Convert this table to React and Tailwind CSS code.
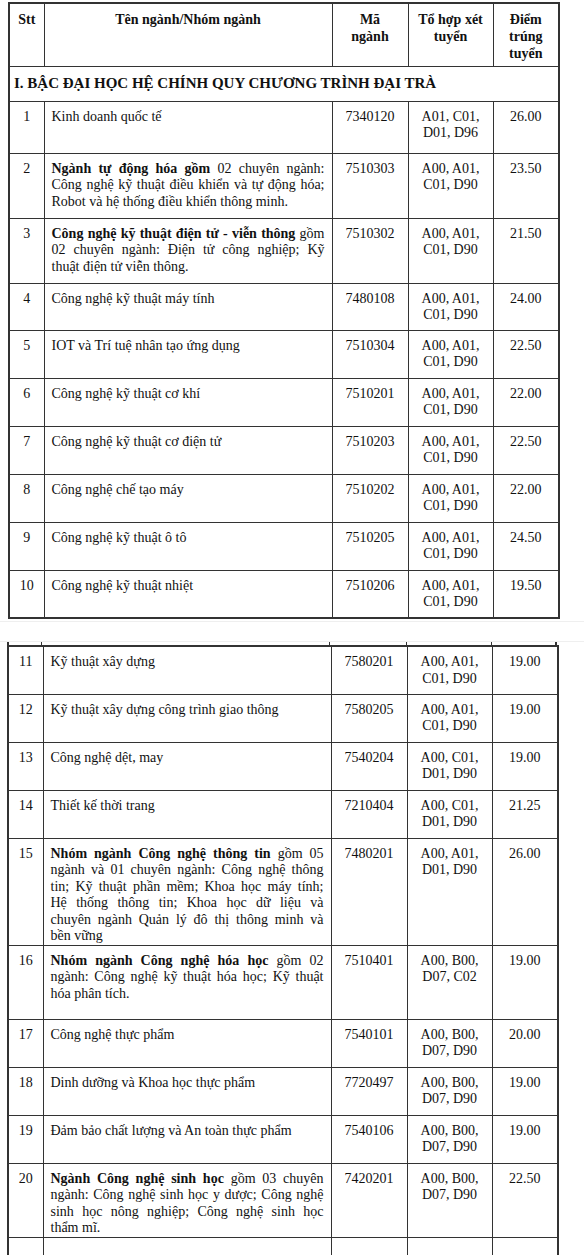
const B = ({ children }) => <span className="font-bold">{children}</span>;

const table1 = [
  { stt: '1', h: 'h-[52px]', name: ['Kinh doanh quốc tế'], ma: '7340120', to: ['A01, C01,', 'D01, D96'], diem: '26.00' },
  {
    stt: '2',
    h: 'h-[65px]',
    name: [
      <><B>Ngành tự động hóa gồm</B> 02 chuyên ngành:</>,
      'Công nghệ kỹ thuật điều khiển và tự động hóa;',
      'Robot và hệ thống điều khiển thông minh.',
    ],
    ma: '7510303',
    to: ['A00, A01,', 'C01, D90'],
    diem: '23.50',
  },
  {
    stt: '3',
    h: 'h-[65px]',
    name: [
      <><B>Công nghệ kỹ thuật điện tử - viễn thông</B> gồm</>,
      '02 chuyên ngành: Điện tử công nghiệp; Kỹ',
      'thuật điện tử viễn thông.',
    ],
    ma: '7510302',
    to: ['A00, A01,', 'C01, D90'],
    diem: '21.50',
  },
  { stt: '4', h: 'h-[47px]', name: ['Công nghệ kỹ thuật máy tính'], ma: '7480108', to: ['A00, A01,', 'C01, D90'], diem: '24.00' },
  { stt: '5', h: 'h-[48px]', name: ['IOT và Trí tuệ nhân tạo ứng dụng'], ma: '7510304', to: ['A00, A01,', 'C01, D90'], diem: '22.50' },
  { stt: '6', h: 'h-[48px]', name: ['Công nghệ kỹ thuật cơ khí'], ma: '7510201', to: ['A00, A01,', 'C01, D90'], diem: '22.00' },
  { stt: '7', h: 'h-[48px]', name: ['Công nghệ kỹ thuật cơ điện tử'], ma: '7510203', to: ['A00, A01,', 'C01, D90'], diem: '22.50' },
  { stt: '8', h: 'h-[48px]', name: ['Công nghệ chế tạo máy'], ma: '7510202', to: ['A00, A01,', 'C01, D90'], diem: '22.00' },
  { stt: '9', h: 'h-[48px]', name: ['Công nghệ kỹ thuật ô tô'], ma: '7510205', to: ['A00, A01,', 'C01, D90'], diem: '24.50' },
  { stt: '10', h: 'h-[48px]', name: ['Công nghệ kỹ thuật nhiệt'], ma: '7510206', to: ['A00, A01,', 'C01, D90'], diem: '19.50' },
];

const table2 = [
  { stt: '11', h: 'h-[48px]', name: ['Kỹ thuật xây dựng'], ma: '7580201', to: ['A00, A01,', 'C01, D90'], diem: '19.00' },
  { stt: '12', h: 'h-[48px]', name: ['Kỹ thuật xây dựng công trình giao thông'], ma: '7580205', to: ['A00, A01,', 'C01, D90'], diem: '19.00' },
  { stt: '13', h: 'h-[48px]', name: ['Công nghệ dệt, may'], ma: '7540204', to: ['A00, C01,', 'D01, D90'], diem: '19.00' },
  { stt: '14', h: 'h-[48px]', name: ['Thiết kế thời trang'], ma: '7210404', to: ['A00, C01,', 'D01, D90'], diem: '21.25' },
  {
    stt: '15',
    h: 'h-[106px]',
    name: [
      <><B>Nhóm ngành Công nghệ thông tin</B> gồm 05</>,
      'ngành và 01 chuyên ngành: Công nghệ thông',
      'tin; Kỹ thuật phần mềm; Khoa học máy tính;',
      'Hệ thống thông tin; Khoa học dữ liệu và',
      'chuyên ngành Quản lý đô thị thông minh và',
      'bền vững',
    ],
    ma: '7480201',
    to: ['A00, A01,', 'D01, D90'],
    diem: '26.00',
  },
  {
    stt: '16',
    h: 'h-[74px]',
    name: [
      <><B>Nhóm ngành Công nghệ hóa học</B> gồm 02</>,
      'ngành: Công nghệ kỹ thuật hóa học; Kỹ thuật',
      'hóa phân tích.',
    ],
    ma: '7510401',
    to: ['A00, B00,', 'D07, C02'],
    diem: '19.00',
  },
  { stt: '17', h: 'h-[48px]', name: ['Công nghệ thực phẩm'], ma: '7540101', to: ['A00, B00,', 'D07, D90'], diem: '20.00' },
  { stt: '18', h: 'h-[48px]', name: ['Dinh dưỡng và Khoa học thực phẩm'], ma: '7720497', to: ['A00, B00,', 'D07, D90'], diem: '19.00' },
  { stt: '19', h: 'h-[48px]', name: ['Đảm bảo chất lượng và An toàn thực phẩm'], ma: '7540106', to: ['A00, B00,', 'D07, D90'], diem: '19.00' },
  {
    stt: '20',
    h: 'h-[73px]',
    name: [
      <><B>Ngành Công nghệ sinh học</B> gồm 03 chuyên</>,
      'ngành: Công nghệ sinh học y dược; Công nghệ',
      'sinh học nông nghiệp; Công nghệ sinh học',
      'thẩm mĩ.',
    ],
    ma: '7420201',
    to: ['A00, B00,', 'D07, D90'],
    diem: '22.50',
  },
];

const cell = 'border border-[#333] align-top pt-[7px] px-[7px]';

function Cols() {
  return (
    <colgroup>
      <col className="w-[35px]" />
      <col className="w-[288px]" />
      <col className="w-[76px]" />
      <col className="w-[85px]" />
      <col className="w-[66px]" />
    </colgroup>
  );
}

function Row({ r }) {
  return (
    <tr className={r.h}>
      <td className={`${cell} text-center`}>{r.stt}</td>
      <td className={cell}>
        {r.name.map((line, i) =>
          i < r.name.length - 1 ? (
            <div key={i} className="text-justify [text-align-last:justify]">{line}</div>
          ) : (
            <div key={i}>{line}</div>
          )
        )}
      </td>
      <td className={`${cell} text-center`}>{r.ma}</td>
      <td className={`${cell} text-center`}>
        {r.to.map((t) => (
          <div key={t}>{t}</div>
        ))}
      </td>
      <td className={`${cell} text-center`}>{r.diem}</td>
    </tr>
  );
}

export default function App() {
  return (
    <div className="bg-white min-h-[1255px] pt-[2px] font-['Liberation_Serif',serif] text-[14px] leading-[16.5px] text-[#111]">
      <table className="ml-[8px] w-[550px] table-fixed border-collapse border-2 border-[#333]">
        <Cols />
        <tbody>
          <tr className="h-[63px] font-bold leading-[17px]">
            <td className={`${cell} text-center`}>Stt</td>
            <td className={`${cell} text-center`}>Tên ngành/Nhóm ngành</td>
            <td className={`${cell} text-center`}>
              <div>Mã</div>
              <div>ngành</div>
            </td>
            <td className={`${cell} text-center`}>
              <div>Tổ hợp xét</div>
              <div>tuyển</div>
            </td>
            <td className={`${cell} text-center`}>
              <div>Điểm</div>
              <div>trúng</div>
              <div>tuyển</div>
            </td>
          </tr>
          <tr className="h-[35px]">
            <td colSpan={5} className="border border-[#333] align-middle px-[4px] font-bold text-[15px]">
              I. BẬC ĐẠI HỌC HỆ CHÍNH QUY CHƯƠNG TRÌNH ĐẠI TRÀ
            </td>
          </tr>
          {table1.map((r) => (
            <Row key={r.stt} r={r} />
          ))}
        </tbody>
      </table>

      <div className="mt-[2px] h-px bg-[#efefef]" />
      <div className="h-[19px]" />
      <div className="h-px bg-[#efefef]" />
      <div className="ml-[7px] flex h-[3px] w-[550px]">
        <div className="w-[34px] border-l-2 border-[#333]" />
        <div className="w-[288px] border-l border-[#333]" />
        <div className="w-[77px] border-l border-[#333]" />
        <div className="w-[85px] border-l border-[#333]" />
        <div className="w-[66px] border-l border-r-2 border-[#333]" />
      </div>

      <table className="ml-[7px] w-[550px] table-fixed border-collapse border-2 border-[#333]">
        <Cols />
        <tbody>
          {table2.map((r) => (
            <Row key={r.stt} r={r} />
          ))}
          <tr className="h-[40px]">
            <td className={cell} />
            <td className={cell} />
            <td className={cell} />
            <td className={cell} />
            <td className={cell} />
          </tr>
        </tbody>
      </table>
    </div>
  );
}
